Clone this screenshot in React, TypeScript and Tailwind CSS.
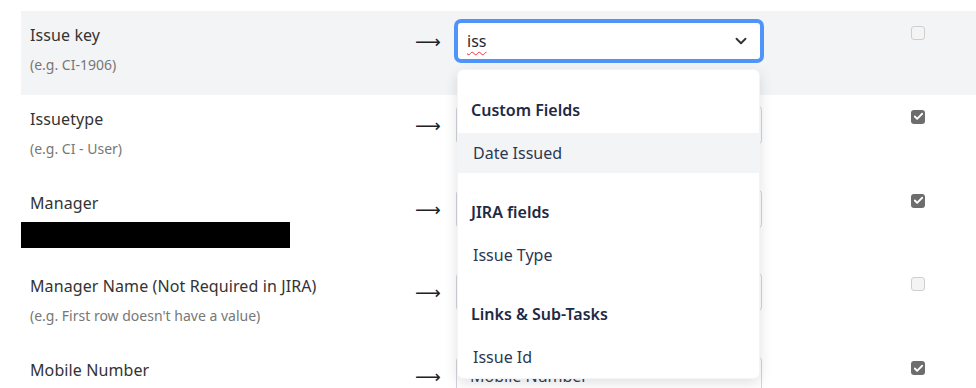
import React from 'react';
import { ChevronDown, Check } from 'lucide-react';

type Row = {
  label: string;
  hint?: string;
  redacted?: boolean;
  value: string;
  checked: boolean;
};

// values of rows 2-4 sit under the open menu, so they are left empty
const rows: Row[] = [
  { label: 'Issue key', hint: '(e.g. CI-1906)', value: 'iss', checked: false },
  { label: 'Issuetype', hint: '(e.g. CI - User)', value: '', checked: true },
  { label: 'Manager', redacted: true, value: '', checked: true },
  { label: 'Manager Name (Not Required in JIRA)', hint: "(e.g. First row doesn't have a value)", value: '', checked: false },
  { label: 'Mobile Number', value: 'Mobile Number', checked: true },
];

const groups = [
  { title: 'Custom Fields', items: ['Date Issued'] },
  { title: 'JIRA fields', items: ['Issue Type'] },
  { title: 'Links & Sub-Tasks', items: ['Issue Id'] },
];

const Checkbox: React.FC<{ checked: boolean }> = ({ checked }) =>
  checked ? (
    <div className="w-[14px] h-[14px] rounded-[3px] bg-[#6d6d6d] flex items-center justify-center text-white">
      <Check size={11} strokeWidth={4} />
    </div>
  ) : (
    <div className="w-[14px] h-[14px] rounded-[3px] border border-[#cfcfcf] bg-[#f4f4f4]" />
  );

const Dropdown: React.FC = () => (
  <div className="absolute left-[1px] top-[48px] w-[303px] z-20 bg-white rounded-md border border-gray-100 shadow-[0_4px_14px_rgba(0,0,0,0.12)] py-[1px]">
    {groups.map((g, gi) => (
      <div key={g.title} className="pt-5">
        <div className="h-[42px] flex items-center pb-1 pl-[13px] text-[16px] font-semibold text-[#1e2a44]">
          {g.title}
        </div>
        {g.items.map((item) => (
          <div
            key={item}
            className={`h-10 flex items-center pl-[15px] text-[16px] text-[#2c3852] ${gi === 0 ? 'bg-[#f3f4f6]' : ''}`}
          >
            {item}
          </div>
        ))}
      </div>
    ))}
  </div>
);

export default function App() {
  return (
    <div className="w-[976px] h-[388px] overflow-hidden bg-white pt-[11px] font-['Noto_Sans',sans-serif]">
      {rows.map((row, i) => (
        <div
          key={row.label}
          className={`ml-[21px] h-[83.75px] flex items-start ${i === 0 ? 'bg-[#f3f4f6]' : ''}`}
        >
          <div className="w-[394px] pt-[12px]">
            <div className="pl-[9px] text-[16px] leading-6 text-[#333] tracking-[0.1px]">{row.label}</div>
            {row.hint && (
              <div className="pl-[9px] mt-2 text-[14px] leading-5 text-[#777]">{row.hint}</div>
            )}
            {row.redacted && <div className="mt-[7px] w-[269px] h-[26px] bg-black" />}
          </div>
          <div className="w-[41px] h-[62px] flex items-center">
            <span className="font-['DejaVu_Sans',sans-serif] text-[18px] leading-none text-[#222]">⟶</span>
          </div>
          <div className="relative mt-[10px] w-[306px]">
            {i === 0 ? (
              <div className="h-10 flex items-center justify-between rounded-[5px] border-2 border-[#4f94f8] ring-2 ring-[#4f94f8] bg-white pl-[9px] pr-[10px]">
                <span className="text-[16px] text-[#1f2937] underline decoration-wavy decoration-red-500 decoration-1 underline-offset-4">
                  {row.value}
                </span>
                <ChevronDown size={18} strokeWidth={2.5} className="text-[#333]" />
              </div>
            ) : (
              <div className="h-10 flex items-center rounded-[5px] border border-[#d1d5db] bg-white pl-[13px] text-[16px] text-[#374151]">
                {row.value}
              </div>
            )}
            {i === 0 && <Dropdown />}
          </div>
          <div className="ml-[149px] mt-[15px]">
            <Checkbox checked={row.checked} />
          </div>
        </div>
      ))}
    </div>
  );
}
